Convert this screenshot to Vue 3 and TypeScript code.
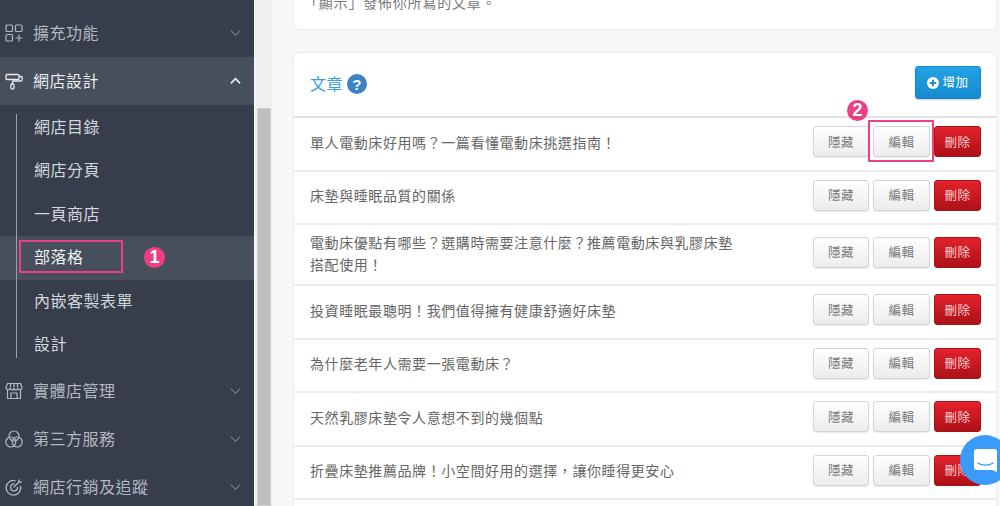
<script setup lang="ts">
const posts: string[] = [
  '單人電動床好用嗎？一篇看懂電動床挑選指南！',
  '床墊與睡眠品質的關係',
  '電動床優點有哪些？選購時需要注意什麼？推薦電動床與乳膠床墊搭配使用！',
  '投資睡眠最聰明！我們值得擁有健康舒適好床墊',
  '為什麼老年人需要一張電動床？',
  '天然乳膠床墊令人意想不到的幾個點',
  '折疊床墊推薦品牌！小空間好用的選擇，讓你睡得更安心',
]
const subs: string[] = ['網店目錄', '網店分頁', '一頁商店', '部落格', '內嵌客製表單', '設計']
</script>

<template>
  <div class="page">
    <aside class="sidebar">
      <div class="nav">
        <svg class="ico" viewBox="0 0 18 18" fill="none" stroke="currentColor" stroke-width="1.2"><rect x="1" y="1" width="6.5" height="6.5" rx="1"/><rect x="10.5" y="1" width="6.5" height="6.5" rx="1"/><rect x="1" y="10.5" width="6.5" height="6.5" rx="1"/><path d="M10.5 14h7M14 10.5v7"/></svg>
        <span class="label">擴充功能</span>
        <svg class="chev" viewBox="0 0 12 8" fill="none" stroke="currentColor" stroke-width="1.1"><path d="M1 1.500l5 5 5-5"/></svg>
      </div>
      <div class="nav open">
        <svg class="ico" viewBox="0 0 18 18" fill="none" stroke="currentColor" stroke-width="1.3"><path d="M2 2.500h11a1 1 0 0 1 1 1v3a1 1 0 0 1-1 1H2a1 1 0 0 1-1-1v-3a1 1 0 0 1 1-1z"/><path d="M14 4.500h2.200a1 1 0 0 1 1 1v2a1.500 1.500 0 0 1-1.500 1.500H8.500a1 1 0 0 0-1 1V12"/><rect x="5.800" y="12" width="3.200" height="5" rx="1.500"/></svg>
        <span class="label">網店設計</span>
        <svg class="chev" viewBox="0 0 12 8" fill="none" stroke="currentColor" stroke-width="1.800"><path d="M1 6.500l5-5 5 5"/></svg>
      </div>
      <div class="subs">
        <div v-for="s in subs" :key="s" class="sub" :class="{ active: s === '部落格' }">
          <span class="sublabel">{{ s }}</span>
          <template v-if="s === '部落格'">
            <span class="mark mark-a"></span>
            <span class="badge badge-a">1</span>
          </template>
        </div>
      </div>
      <div class="nav">
        <svg class="ico" viewBox="0 0 18 18" fill="none" stroke="currentColor" stroke-width="1.200"><path d="M2.500 1.500h13l1.500 4a2 2 0 0 1-4 .4 2 2 0 0 1-4 0 2 2 0 0 1-4 0 2 2 0 0 1-4-.4z"/><path d="M2.500 7.500v9h13v-9M5.500 1.500v4M9 1.500v4M12.500 1.500v4M6 11h6v5.500H6z"/></svg>
        <span class="label">實體店管理</span>
        <svg class="chev" viewBox="0 0 12 8" fill="none" stroke="currentColor" stroke-width="1.100"><path d="M1 1.500l5 5 5-5"/></svg>
      </div>
      <div class="nav">
        <svg class="ico" viewBox="0 0 18 18" fill="none" stroke="currentColor" stroke-width="1.200"><circle cx="9" cy="6" r="5"/><circle cx="5.800" cy="12" r="5"/><circle cx="12.200" cy="12" r="5"/></svg>
        <span class="label">第三方服務</span>
        <svg class="chev" viewBox="0 0 12 8" fill="none" stroke="currentColor" stroke-width="1.100"><path d="M1 1.500l5 5 5-5"/></svg>
      </div>
      <div class="nav">
        <svg class="ico" viewBox="0 0 18 18" fill="none" stroke="currentColor" stroke-width="1.300"><path d="M10.500 2.800A7.300 7.300 0 1 0 15.500 8"/><path d="M9.500 6a3.500 3.500 0 1 0 3 3"/><path d="M8.500 9.500L14 4M14 4V1.500M14 4h2.500"/></svg>
        <span class="label">網店行銷及追蹤</span>
        <svg class="chev" viewBox="0 0 12 8" fill="none" stroke="currentColor" stroke-width="1.100"><path d="M1 1.500l5 5 5-5"/></svg>
      </div>
    </aside>

    <div class="scrollbar"><div class="thumb"></div></div>

    <main class="content">
      <section class="card intro">
        <p>「顯示」發佈你所寫的文章。</p>
      </section>

      <section class="card list">
        <header class="head">
          <div class="title">
            <span>文章</span>
            <svg class="help" viewBox="0 0 20 20"><circle cx="10" cy="10" r="10" fill="#3b83c4"/><text x="10" y="15.500" text-anchor="middle" font-size="15" font-weight="700" fill="#fff" font-family="Liberation Sans, sans-serif">?</text></svg>
          </div>
          <button class="btn add">
            <svg class="plus" viewBox="0 0 12 12"><circle cx="6" cy="6" r="6" fill="#fff"/><path d="M6 2.800v6.400M2.800 6h6.400" stroke="#1a90d8" stroke-width="2"/></svg>
            增加
          </button>
        </header>
        <div v-for="(p, i) in posts" :key="p" class="row" :class="{ tall: i === 2 }">
          <div class="name">{{ p }}</div>
          <div class="actions">
            <button class="btn plain hide">隱藏</button>
            <button class="btn plain edit">
              編輯
              <template v-if="i === 0">
                <span class="mark mark-b"></span>
                <span class="badge badge-b">2</span>
              </template>
            </button>
            <button class="btn del">刪除</button>
          </div>
        </div>
        <div class="more"></div>
      </section>
    </main>

    <div class="chat">
      <svg viewBox="0 0 24 24" width="23" height="25"><path d="M3 0h18a3 3 0 0 1 3 3v21l-5-2.200H3a3 3 0 0 1-3-3V3a3 3 0 0 1 3-3z" fill="#fff"/><path d="M4 14.500c4.500 3 11.500 3 16 0" fill="none" stroke="#3a9bfa" stroke-width="1.300" stroke-linecap="round"/></svg>
    </div>
  </div>
</template>

<style>
html, body { margin: 0; overflow: hidden; }
</style>

<style scoped>
.page {
  position: relative;
  display: flex;
  width: 1000px;
  height: 506px;
  overflow: hidden;
  background: #f7f7f7;
  font-family: "Noto Sans CJK TC", "Liberation Sans", sans-serif;
  letter-spacing: 0.5px;
}
.sidebar {
  flex: 0 0 254px;
  box-sizing: border-box;
  padding-top: 9px;
  background: #373d4b;
  color: #b4b8c0;
}
.nav {
  display: flex;
  align-items: center;
  height: 48px;
  padding: 0 13px 0 5px;
  font-size: 16px;
}
.nav.open { background: #474e5c; color: #e9ebee; }
.ico { width: 18px; height: 18px; flex: none; }
.label { margin: -3px 0 0 10px; flex: 1; line-height: 20px; }
.chev { width: 11px; height: 8px; flex: none; color: #7d838f; }
.open .chev { color: #f1f2f4; }
.subs {
  position: relative;
  height: 262px;
  display: flex;
  flex-direction: column;
  justify-content: center;
}
.subs::before {
  content: "";
  position: absolute;
  left: 16px;
  top: 9px;
  height: 244px;
  width: 1px;
  background: #99a0ab;
  z-index: 1;
}
.sub {
  position: relative;
  display: flex;
  align-items: center;
  height: 43.500px;
  padding-left: 34px;
  font-size: 16px;
  color: #d3d7dc;
}
.sublabel { margin-top: -3px; }
.sub.active { background: #474e5c; color: #eef0f2; }
.mark {
  position: absolute;
  box-sizing: border-box;
  border: 2px solid #ea4184;
  pointer-events: none;
}
.mark-a { left: 19px; top: 4px; width: 104px; height: 33px; }
.badge {
  position: absolute;
  width: 21px;
  height: 21px;
  border-radius: 50%;
  background: #ee3f84;
  color: #fff;
  font: 700 18px/21px "Liberation Sans", sans-serif;
  letter-spacing: 0;
  text-align: center;
}
.badge-a { left: 144px; top: 11px; }
.scrollbar {
  flex: 0 0 18px;
  box-sizing: border-box;
  border-left: 1px solid #fff;
  background: #efefef;
  position: relative;
}
.thumb {
  position: absolute;
  left: 2px;
  right: 1px;
  top: 108px;
  bottom: 0;
  box-sizing: border-box;
  border: 1px solid #d0d0d0;
  background: #bdbdbd;
}
.content {
  flex: 1;
  min-width: 0;
  padding: 0 3px 0 21px;
}
.card {
  background: #fff;
  border: 1px solid #ebebeb;
  border-radius: 6px;
}
.intro {
  height: 30px;
  box-sizing: border-box;
  border-top: 0;
  border-radius: 0 0 6px 6px;
  overflow: hidden;
}
.intro p {
  margin: -8px 0 0 10px;
  font-size: 14px;
  line-height: 20px;
  color: #777;
  white-space: nowrap;
  letter-spacing: 0.8px;
}
.list { margin-top: 22px; }
.head {
  display: flex;
  align-items: center;
  justify-content: space-between;
  box-sizing: border-box;
  height: 65px;
  padding: 0 15px 4px 16px;
  border-bottom: 2px solid #e2e2e2;
}
.title {
  display: flex;
  align-items: center;
  gap: 3.500px;
  font-size: 16px;
  color: #3a9ee0;
}
.help { width: 20px; height: 20px; margin-top: 2px; }
.row {
  display: flex;
  align-items: center;
  justify-content: space-between;
  height: 53.500px;
  box-sizing: border-box;
  padding: 0 15px 0 16px;
  border-bottom: 2px solid #ececec;
}
.row.tall { height: 61px; }
.name {
  width: 432px;
  margin-top: -4px;
  font-size: 14px;
  line-height: 22px;
  color: #666;
  letter-spacing: 0.58px;
}
.actions { display: flex; gap: 4px; margin-bottom: 4px; }
.more { height: 60px; }
.btn {
  box-sizing: border-box;
  height: 31px;
  padding: 0;
  border-radius: 3px;
  font: 12.500px/1 "Noto Sans CJK TC", "Liberation Sans", sans-serif;
  letter-spacing: 0.5px;
  cursor: pointer;
}
.plain {
  position: relative;
  width: 57px;
  border: 1px solid #d4d4d4;
  background: linear-gradient(#fff, #ececec);
  color: #777;
  box-shadow: 0 1px 1px rgba(0,0,0,.08);
}
.hide { width: 56px; }
.del {
  width: 47px;
  border: 1px solid #a81319;
  background: linear-gradient(#e4222c, #ad1118);
  color: #f7d4d6;
}
.add {
  display: flex;
  align-items: center;
  justify-content: center;
  gap: 3px;
  width: 66px;
  height: 33px;
  border: 1px solid #1a85c9;
  background: linear-gradient(#23a3e4, #1689d0);
  color: #fff;
  box-shadow: 0 1px 2px rgba(0,0,0,.2);
}
.plus { width: 12px; height: 12px; }
.mark-b { left: -6px; top: -7px; width: 66px; height: 42px; }
.badge-b { left: -27px; top: -27px; }
.chat {
  position: absolute;
  left: 960px;
  top: 435px;
  width: 50px;
  height: 50px;
  border-radius: 50%;
  background: #3a9bfa;
  display: flex;
  align-items: center;
  padding-left: 14px;
  box-sizing: border-box;
}
</style>
